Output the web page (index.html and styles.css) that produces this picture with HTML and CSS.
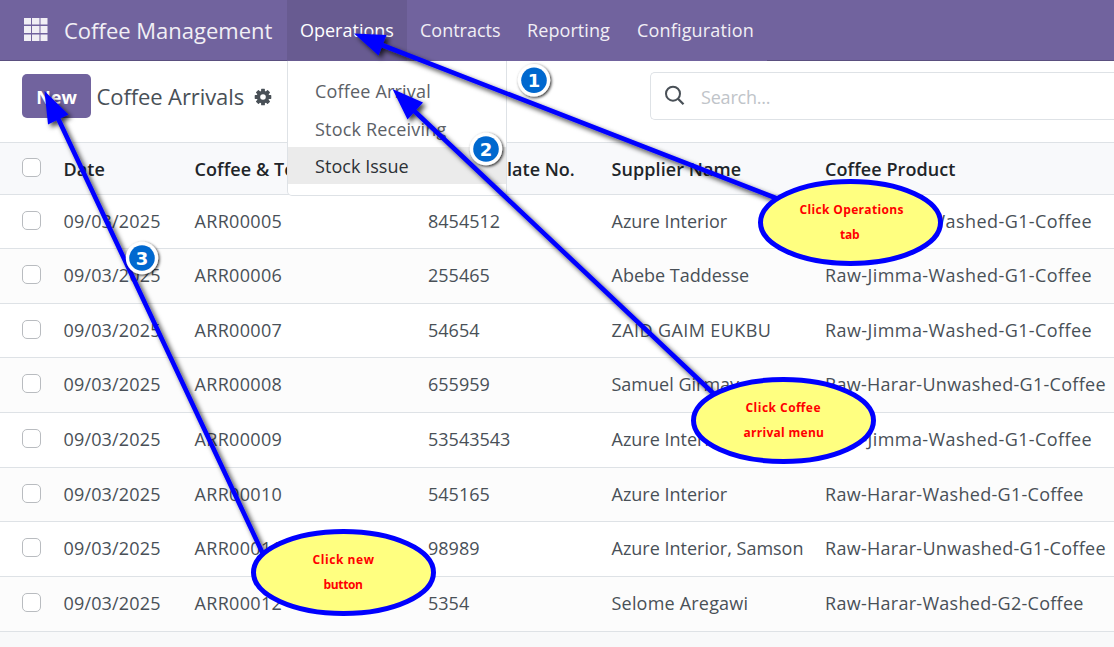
FILE: index.html
```html
<!DOCTYPE html>
<html lang="en">
<head>
<meta charset="utf-8">
<title>Coffee Arrivals</title>
<link rel="stylesheet" href="styles.css">
</head>
<body>
<div class="app">
  <header class="navbar">
    <div class="brand">
      <svg class="apps" width="24" height="23" viewBox="0 0 24 23" fill="#f1eff5"><path d="M0 0h7v6.500h-7zM8 0h7.500v6.500h-7.500zM16.500 0h7v6.500h-7zM0 8h7v7h-7zM8 8h7.500v7h-7.500zM16.500 8h7v7h-7zM0 16.500h7v6.500h-7zM8 16.500h7.500v6.500h-7.500zM16.500 16.500h7v6.500h-7z"/></svg>
      <span class="brand-name">Coffee Management</span>
    </div>
    <nav class="menu">
      <div class="menu-item active w-operations"><span>Operations</span>
        <div class="dropdown">
          <a class="drop-item">Coffee Arrival</a>
          <a class="drop-item">Stock Receiving</a>
          <a class="drop-item hovered">Stock Issue</a>
        </div>
      </div>
      <div class="menu-item w-contracts"><span>Contracts</span></div>
      <div class="menu-item w-reporting"><span>Reporting</span></div>
      <div class="menu-item w-configuration"><span>Configuration</span></div>
    </nav>
    <div class="nav-rest"></div>
  </header>
  <section class="control">
    <div class="crumbs">
      <button class="new">New</button>
      <span class="page-title">Coffee Arrivals</span>
      <svg class="gear" width="18" height="18" viewBox="-9 -9 18 18"><g fill="#495057"><g id="t"><rect x="-1.900" y="-8.300" width="3.800" height="16.600" rx=".6"/><rect x="-8.300" y="-1.900" width="16.600" height="3.800" rx=".6"/></g><use href="#t" transform="rotate(45)"/><circle r="6.300"/></g><circle r="2.800" fill="#fff"/></svg>
    </div>
    <div class="search">
      <svg width="22" height="22" viewBox="0 0 22 22" fill="none" stroke="#495057" stroke-width="2"><circle cx="9" cy="8.700" r="7"/><path d="M14 13.800l5.500 5.400" stroke-width="2.300"/></svg>
      <span class="placeholder">Search...</span>
    </div>
  </section>
  <main class="list">
    <div class="row head"><i class="check"></i><span>Date</span><span>Coffee &amp; Te</span><span class="plate">Plate No.</span><span>Supplier Name</span><span>Coffee Product</span></div>
    <div class="row"><i class="check"></i><span class="date">09/03/2025</span><span class="ref">ARR00005</span><span>8454512</span><span>Azure Interior</span><span class="jimma">Raw-Jimma-Washed-G1-Coffee</span></div>
    <div class="row"><i class="check"></i><span class="date">09/03/2025</span><span class="ref">ARR00006</span><span>255465</span><span>Abebe Taddesse</span><span class="jimma">Raw-Jimma-Washed-G1-Coffee</span></div>
    <div class="row"><i class="check"></i><span class="date">09/03/2025</span><span class="ref">ARR00007</span><span>54654</span><span class="caps">ZAID GAIM EUKBU</span><span class="jimma">Raw-Jimma-Washed-G1-Coffee</span></div>
    <div class="row"><i class="check"></i><span class="date">09/03/2025</span><span class="ref">ARR00008</span><span>655959</span><span>Samuel Girmay</span><span class="harar">Raw-Harar-Unwashed-G1-Coffee</span></div>
    <div class="row"><i class="check"></i><span class="date">09/03/2025</span><span class="ref">ARR00009</span><span>53543543</span><span>Azure Interior</span><span class="jimma">Raw-Jimma-Washed-G1-Coffee</span></div>
    <div class="row"><i class="check"></i><span class="date">09/03/2025</span><span class="ref">ARR00010</span><span>545165</span><span>Azure Interior</span><span class="harar">Raw-Harar-Washed-G1-Coffee</span></div>
    <div class="row"><i class="check"></i><span class="date">09/03/2025</span><span class="ref">ARR00011</span><span>98989</span><span>Azure Interior, Samson</span><span class="harar">Raw-Harar-Unwashed-G1-Coffee</span></div>
    <div class="row"><i class="check"></i><span class="date">09/03/2025</span><span class="ref">ARR00012</span><span>5354</span><span class="wide">Selome Aregawi</span><span class="harar">Raw-Harar-Washed-G2-Coffee</span></div>
  </main>
  <svg class="annotations" width="1114" height="647" viewBox="0 0 1114 647">
    <defs>
      <filter id="shadow" filterUnits="userSpaceOnUse" x="0" y="0" width="1114" height="647"><feDropShadow dx="3" dy="3" stdDeviation="2.500" flood-color="#000" flood-opacity=".75"/></filter>
      <filter id="soft" filterUnits="userSpaceOnUse" x="0" y="0" width="1114" height="647"><feDropShadow dx="1.200" dy="1.200" stdDeviation="1.500" flood-color="#000" flood-opacity=".85"/></filter>
    </defs>
    <g filter="url(#shadow)" stroke="#00f" stroke-width="4.600" fill="#00f">
      <path d="M378 43.500L777 198.500M409 106L714 394M56 114L263 554"/>
      <path stroke="none" d="M354 33.500L386.500 35L378.500 55.500zM392.500 89L423 102.500L407.500 119.500zM44.500 91L68.500 114.500L48 124.500z"/>
    </g>
    <g filter="url(#soft)">
      <g fill="#fff"><circle cx="534" cy="80.300" r="16.200"/><circle cx="486" cy="149" r="16.200"/><circle cx="142" cy="258" r="16.200"/></g>
    </g>
    <g fill="#0068cf"><circle cx="534" cy="80.300" r="12.800"/><circle cx="486" cy="149" r="12.800"/><circle cx="142" cy="258" r="12.800"/></g>
    <g class="badge-num"><text x="534" y="87">1</text><text x="486" y="156">2</text><text x="142" y="265">3</text></g>
    <g fill="#ffff80" stroke="#00f" stroke-width="5"><ellipse cx="850.500" cy="222.500" rx="90" ry="41"/><ellipse cx="783.500" cy="420.500" rx="90" ry="41"/><ellipse cx="343.500" cy="572.500" rx="90" ry="41"/></g>
    <g class="callout">
      <text x="799.500" y="214" textLength="104">Click Operations</text><text x="840" y="239" textLength="19.500">tab</text>
      <text x="745.500" y="412" textLength="75">Click Coffee</text><text x="743.500" y="437" textLength="80.500">arrival menu</text>
      <text x="312.500" y="564" textLength="61.500">Click new</text><text x="323.500" y="589" textLength="39.500">button</text>
    </g>
  </svg>
</div>
</body>
</html>
```
FILE: styles.css
```css
* { box-sizing: border-box; }
body { margin: 0; font-family: "Open Sans", "Noto Sans", sans-serif; font-size: 18px; color: #495057; background: #f8f9fa; }
.app { position: relative; width: 1114px; height: 647px; overflow: hidden; }
.navbar { display: flex; height: 61px; background: #71639e; color: #f1eff5; }
.brand { display: flex; align-items: center; width: 287px; padding-left: 24px; gap: 16px; border-bottom: 1px solid #5a4f7f; white-space: nowrap; }
.apps { flex: none; margin-bottom: 1px; }
.brand-name { font-size: 22px; }
.menu { display: flex; }
.menu-item { position: relative; display: flex; align-items: center; padding: 0 0 2px 13px; white-space: nowrap; }
.active { background: #685b91; color: #fff; }
.w-operations { width: 120px; }
.w-contracts { width: 107px; }
.w-reporting { width: 110px; letter-spacing: .08px; }
.w-configuration { width: 143px; letter-spacing: .17px; }
.nav-rest { flex: 1; border-bottom: 1px solid #5a4f7f; }
.dropdown { position: absolute; z-index: 2; top: 61px; left: 0; width: 220px; height: 135px; padding-top: 11px; background: #fff; border: 1px solid #dee2e6; border-top: 0; border-radius: 0 0 5px 5px; letter-spacing: .18px; }
.drop-item { display: flex; align-items: center; height: 37.500px; padding-left: 27px; color: #5c6167; }
.drop-item:nth-child(2) { padding-top: 1px; }
.hovered { height: 37px; background: #ebebeb; color: #2c3136; letter-spacing: .05px; }
.control { display: flex; height: 81px; background: #fff; }
.crumbs { display: flex; align-items: center; width: 650px; padding: 0 0 12px 22px; }
.new { width: 69px; height: 44px; margin: 1px 5.500px 0 0; padding: 2px 0 0; border: 0; border-radius: 5px; background: #71639e; color: #fff; font: bold 18px "Open Sans", sans-serif; }
.page-title { width: 157.500px; font-size: 22px; letter-spacing: -.1px; white-space: nowrap; }
.gear { flex: none; margin-top: 3px; }
.search { display: flex; align-items: center; flex: 1; height: 48px; margin-top: 11px; padding-left: 13px; gap: 15px; border: 1px solid #dee2e6; border-right: 0; border-radius: 5px 0 0 5px; }
.placeholder { padding-top: 1px; color: #c0c4c9; letter-spacing: -.2px; }
.list { display: flex; flex-direction: column; }
.row { display: grid; grid-template-columns: 41.500px 131px 233.500px 183.500px 213.500px 289px; align-items: center; height: 55px; padding-left: 22px; border-bottom: 1px solid #dee2e6; background: #fff; white-space: nowrap; }
.row:nth-child(2), .row:nth-child(4), .row:nth-child(7) { height: 54px; }
.row:nth-child(odd) { background: #fcfcfc; }
.row > span { padding-bottom: 2px; }
.row.head { height: 53px; border-top: 1px solid #dee2e6; background: #f8f9fb; color: #212529; font-weight: 600; letter-spacing: .08px; }
.row.head > span { padding-bottom: 0; }
.check { width: 19px; height: 19px; margin-bottom: 3px; border: 1px solid #b9bcc0; border-radius: 5px; background: #fff; }
.row .plate { padding-left: 68px; letter-spacing: 0; }
.date { letter-spacing: .16px; }
.ref { letter-spacing: .32px; }
.caps { letter-spacing: .4px; }
.wide { letter-spacing: .2px; }
.jimma { letter-spacing: .42px; }
.harar { letter-spacing: .28px; }
.annotations { position: absolute; z-index: 5; top: 0; left: 0; }
.badge-num { font: bold 18px "DejaVu Sans", sans-serif; fill: #fff; text-anchor: middle; }
.callout { font: bold 12px "Open Sans", sans-serif; fill: #f00; }
```
